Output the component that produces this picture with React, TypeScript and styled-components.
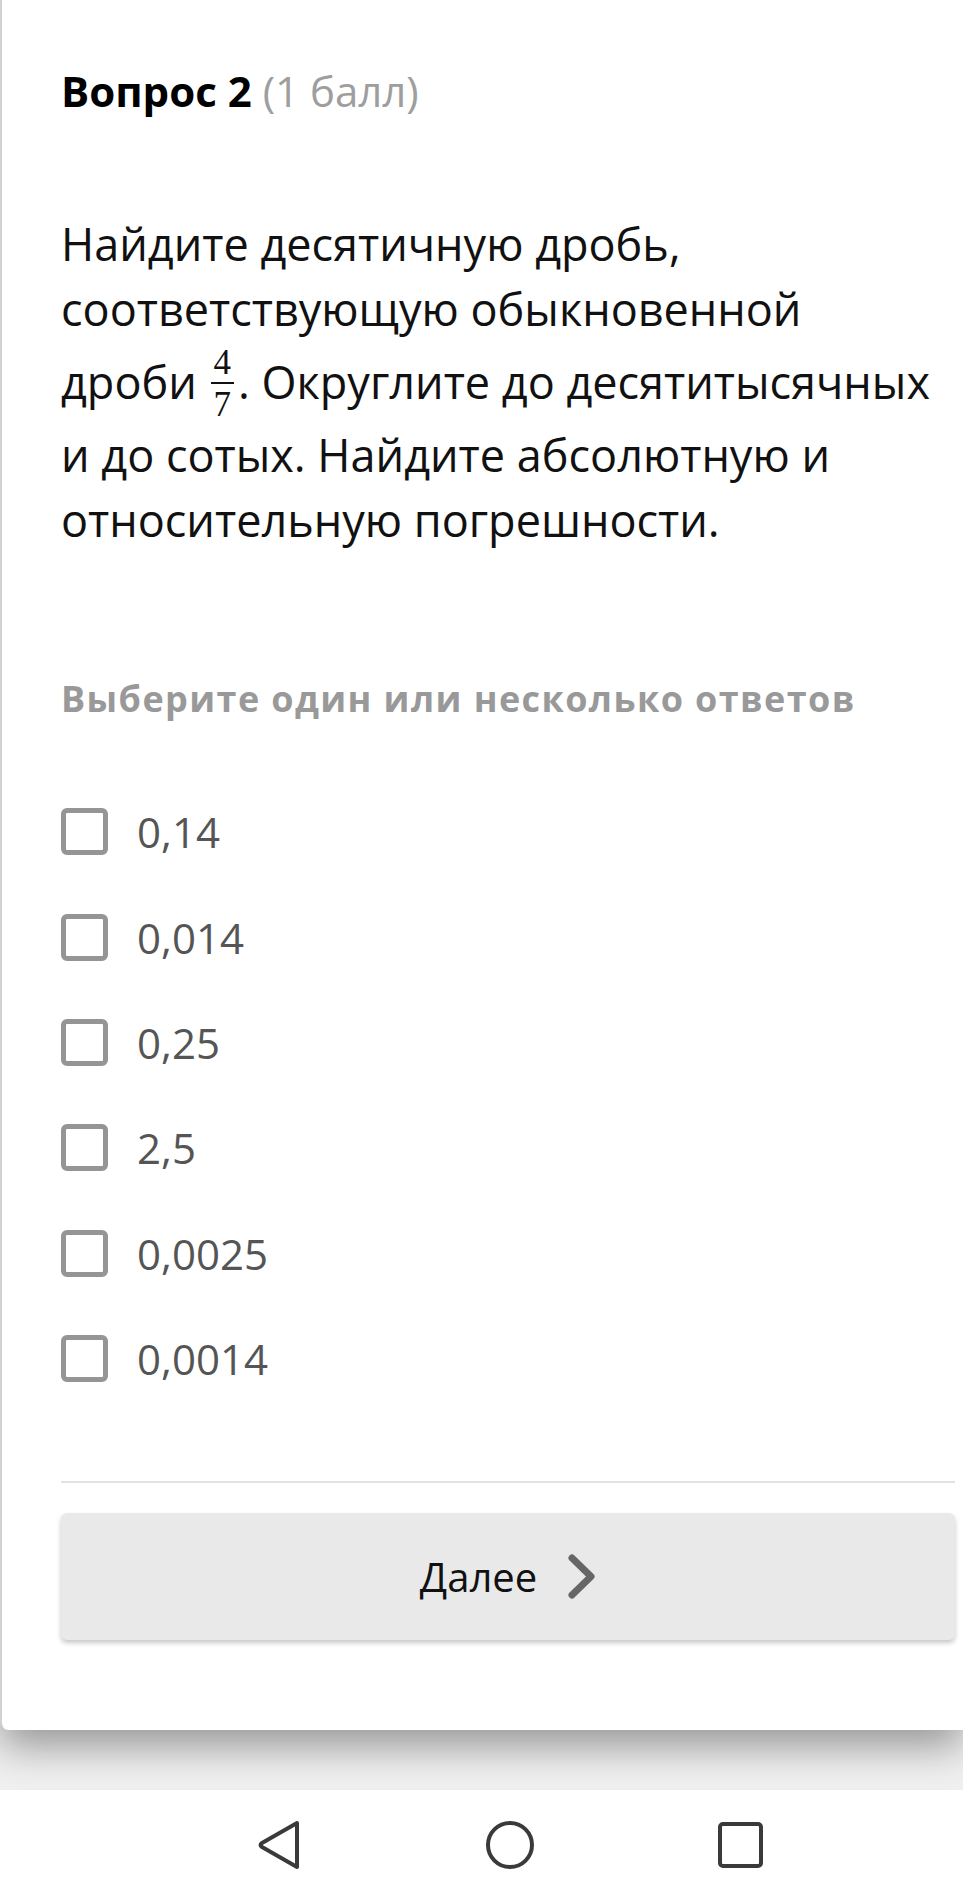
import React from "react";
import styled, { createGlobalStyle } from "styled-components";

const GlobalStyle = createGlobalStyle`
    * {
        box-sizing: border-box;
    }
    body {
        margin: 0;
        background: #f0f0f0;
        font-family: "Open Sans", "Noto Sans", sans-serif;
    }
`;

const Page = styled.div`
    display: flex;
    flex-direction: column;
    min-height: 1899px;
`;

const Card = styled.div`
    height: 1730px;
    background: #fff;
    border-left: 2px solid #d2d2d2;
    border-bottom-left-radius: 8px;
    padding: 62px 8px 0 59px;
    box-shadow: 0 16px 40px rgba(0, 0, 0, 0.38);
    display: flex;
    flex-direction: column;
    position: relative;
    z-index: 1;
`;

const Gap = styled.div`
    height: 60px;
`;

const Title = styled.h2`
    margin: 0;
    font-size: 42px;
    line-height: 57px;
    font-weight: 700;
    color: #000;
`;

const Points = styled.span`
    font-weight: 400;
    color: #9e9e9e;
`;

const Question = styled.p`
    margin: 92px 0 0;
    font-size: 45px;
    line-height: 65px;
    color: #111;
`;

const NoWrap = styled.span`
    white-space: nowrap;
`;

const Frac = styled.span`
    display: inline-flex;
    flex-direction: column;
    align-items: center;
    vertical-align: 25px;
    margin: 6px 4px 1px 2px;
    font-family: "Liberation Serif", "Times New Roman", serif;
    font-size: 35px;
    line-height: 32px;
`;

const Num = styled.span`
    padding: 0 3px 3px;
    border-bottom: 2px solid #111;
`;

const Den = styled.span`
    padding-top: 5px;
`;

const Hint = styled.div`
    margin-top: 125px;
    font-size: 36px;
    line-height: 44px;
    letter-spacing: 1.4px;
    font-weight: 700;
    color: #999;
`;

const Options = styled.div`
    margin-top: 58px;
    display: flex;
    flex-direction: column;
`;

const Option = styled.label`
    height: 105.4px;
    display: flex;
    align-items: center;
    gap: 29px;
    font-size: 42px;
    color: #555;
    cursor: pointer;
`;

const Box = styled.span`
    width: 47px;
    height: 47px;
    border: 5px solid #959595;
    border-radius: 6px;
    background: #fff;
    flex-shrink: 0;
`;

const Divider = styled.hr`
    margin: 70px 0 0;
    border: none;
    height: 2px;
    background: #e3e3e3;
`;

const NextButton = styled.button`
    margin-top: 30px;
    height: 127px;
    border: none;
    border-radius: 6px;
    background: #e9e9e9;
    box-shadow: 0 3px 5px rgba(0, 0, 0, 0.22);
    display: flex;
    align-items: center;
    justify-content: center;
    gap: 31px;
    font-family: "Open Sans", sans-serif;
    font-size: 40px;
    color: #111;
    cursor: pointer;
`;

const NavBar = styled.div`
    height: 109px;
    background: #fff;
    display: flex;
    align-items: center;
    justify-content: center;
    gap: 183px;
    padding-left: 57px;
`;

const answers = ["0,14", "0,014", "0,25", "2,5", "0,0025", "0,0014"];

export default function App() {
    return (
        <Page>
            <GlobalStyle />
            <Card>
                <Title>
                    Вопрос 2 <Points>(1 балл)</Points>
                </Title>
                <Question>
                    Найдите десятичную дробь, соответствующую обыкновенной{" "}
                    <NoWrap>
                        дроби{" "}
                        <Frac>
                            <Num>4</Num>
                            <Den>7</Den>
                        </Frac>
                        .
                    </NoWrap>{" "}
                    Округлите до десятитысячных и до сотых. Найдите абсолютную и
                    относительную погрешности.
                </Question>
                <Hint>Выберите один или несколько ответов</Hint>
                <Options>
                    {answers.map(a => (
                        <Option key={a}>
                            <Box />
                            {a}
                        </Option>
                    ))}
                </Options>
                <Divider />
                <NextButton>
                    Далее
                    <svg width="28" height="45" viewBox="0 0 28 45">
                        <path
                            d="M4 4 L23 22.5 L4 41"
                            fill="none"
                            stroke="#666"
                            strokeWidth="7"
                            strokeLinecap="round"
                            strokeLinejoin="round"
                        />
                    </svg>
                </NextButton>
            </Card>
            <Gap />
            <NavBar>
                <svg width="45" height="50" viewBox="0 0 45 50">
                    <path
                        d="M40 3 L5 23 Q2 25 5 27 L40 47 Z"
                        fill="none"
                        stroke="#3a3a3a"
                        strokeWidth="4"
                        strokeLinejoin="round"
                    />
                </svg>
                <svg width="50" height="50" viewBox="0 0 50 50">
                    <circle cx="25" cy="25" r="22" fill="none" stroke="#3a3a3a" strokeWidth="4" />
                </svg>
                <svg width="45" height="46" viewBox="0 0 45 46">
                    <rect x="2" y="2" width="41" height="42" rx="3" fill="none" stroke="#3a3a3a" strokeWidth="4" />
                </svg>
            </NavBar>
        </Page>
    );
}
